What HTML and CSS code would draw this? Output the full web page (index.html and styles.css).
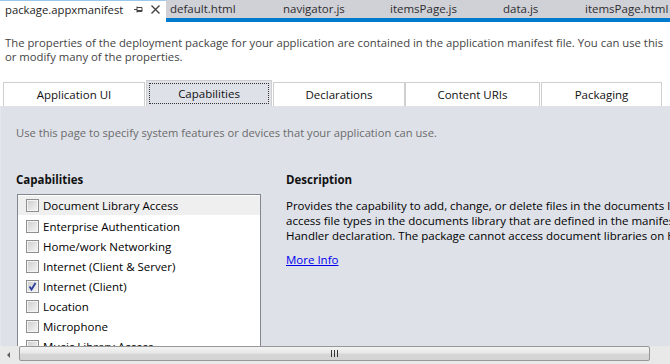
FILE: index.html
```html
<!DOCTYPE html>
<html>
<head>
<meta charset="utf-8">
<link rel="stylesheet" href="styles.css">
</head>
<body>
<div class="doctabs">
  <div class="doctab active">
    <span class="doctab-name">package.appxmanifest</span>
    <svg class="pin" width="9" height="9" viewBox="0 0 9 9"><path d="M0 4.5H3M3 1.5V7.5M3 2.5H8V6.5H3M3 5.5H8" fill="none" stroke="#444" stroke-width="1"/></svg>
    <svg class="close" width="9" height="9" viewBox="0 0 9 9"><path d="M0.5 0.5L8.5 8.5M8.5 0.5L0.5 8.5" fill="none" stroke="#444" stroke-width="1.4"/></svg>
  </div>
  <div class="well">
    <div class="doctab t1">default.html</div>
    <div class="doctab t2">navigator.js</div>
    <div class="doctab t3">itemsPage.js</div>
    <div class="doctab t4">data.js</div>
    <div class="doctab t5">itemsPage.html</div>
  </div>
</div>
<div class="intro">
  <div class="line">The properties of the deployment package for your application are contained in the application manifest file. You can use this</div>
  <div class="line">or modify many of the properties.</div>
</div>
<div class="tabs">
  <div class="tab w1">Application UI</div>
  <div class="tab w2 selected"><span>Capabilities</span></div>
  <div class="tab w3">Declarations</div>
  <div class="tab w4">Content URIs</div>
  <div class="tab w5">Packaging</div>
</div>
<div class="panel">
  <div class="hint">Use this page to specify system features or devices that your application can use.</div>
  <div class="cols">
    <div class="left">
      <div class="heading">Capabilities</div>
      <div class="listbox">
        <div class="item hl"><span class="cb"></span>Document Library Access</div>
        <div class="item"><span class="cb"></span>Enterprise Authentication</div>
        <div class="item"><span class="cb"></span>Home/work Networking</div>
        <div class="item"><span class="cb"></span>Internet (Client &amp; Server)</div>
        <div class="item"><span class="cb checked"><svg width="11" height="11" viewBox="0 0 11 11"><path d="M2.5 5.5L4.5 8.5L8.5 2" fill="none" stroke="#2a3f99" stroke-width="1.8"/></svg></span>Internet (Client)</div>
        <div class="item"><span class="cb"></span>Location</div>
        <div class="item"><span class="cb"></span>Microphone</div>
        <div class="item"><span class="cb"></span>Music Library Access</div>
      </div>
    </div>
    <div class="right">
      <div class="heading">Description</div>
      <div class="desc">
        <div class="line">Provides the capability to add, change, or delete files in the documents library for the local PC. The package can only</div>
        <div class="line">access file types in the documents library that are defined in the manifest using the File Type Associations</div>
        <div class="line">Handler declaration. The package cannot access document libraries on HomeGroup computers.</div>
      </div>
      <a class="more" href="#">More Info</a>
    </div>
  </div>
</div>
<div class="hscroll">
  <div class="arrow"></div>
  <div class="thumb"><span class="grip"></span></div>
</div>
</body>
</html>
```

FILE: styles.css
```css
html, body {
  margin: 0;
  padding: 0;
  width: 670px;
  height: 364px;
  overflow: hidden;
  background: #ffffff;
  font-family: "Open Sans", "Noto Sans", sans-serif;
  font-size: 11px;
  color: #000;
  position: relative;
}

.doctabs {
  display: flex;
  height: 22px;
}

.doctab.active {
  width: 166px;
  flex: none;
  box-sizing: border-box;
  background: #fff;
  border-top: 1px solid #9cc7e8;
  display: flex;
  align-items: center;
  padding-left: 5px;
  padding-bottom: 4px;
  color: #1e1e1e;
  font-size: 11.3px;
}

.doctab-name { width: 129px; flex: none; white-space: nowrap; }

.pin { margin-right: 8px; flex: none; }
.close { flex: none; }

.well {
  flex: 1;
  display: flex;
  background: #d0d1d7;
  border-bottom: 4px solid #007acc;
  height: 18px;
  overflow: hidden;
}

.well .doctab {
  line-height: 18px;
  font-size: 11.5px;
  color: #2d2d30;
  white-space: nowrap;
  padding-left: 4px;
  box-sizing: border-box;
  flex: none;
}
.t1 { width: 113px; }
.t2 { width: 107px; }
.t3 { width: 113px; }
.t4 { width: 82px; }
.t5 { flex: 1 1 auto !important; }

.intro {
  padding: 14px 0 0 5px;
  color: #444;
  font-size: 11.3px;
  line-height: 14px;
  white-space: nowrap;
  overflow: hidden;
  height: 44px;
}

.tabs {
  display: flex;
  align-items: flex-end;
  height: 26px;
  padding-left: 3px;
}

.tab {
  height: 24px;
  box-sizing: border-box;
  border: 1px solid #cfcfcf;
  border-bottom: none;
  display: flex;
  align-items: center;
  justify-content: center;
  background: #fff;
  font-size: 11.5px;
  color: #111;
}
.w1 { width: 142px; margin-right: 1px; }
.w2 { width: 126px; margin-right: 1px; }
.w3 { width: 132px; }
.w4 { width: 135px; margin-right: 1px; }
.w5 { width: 121px; }

.tab.selected {
  height: 26px;
  background: #dee1e8;
  border-color: #cfcfcf;
  padding: 2px;
}
.tab.selected span {
  flex: 1;
  align-self: stretch;
  display: flex;
  align-items: center;
  justify-content: center;
  border: 1px dotted #333;
}

.panel {
  background: #dee1e8;
  height: 258px;
  padding-left: 15px;
  border-left: 1px solid #e6e7ea;
  box-sizing: border-box;
}

.hint {
  padding-top: 20px;
  color: #6b6b6b;
  font-size: 11.2px;
  line-height: 14px;
  white-space: nowrap;
}

.cols {
  display: flex;
  margin-top: 33px;
}

.heading {
  font-weight: bold;
  font-size: 11.5px;
  line-height: 14px;
  color: #111;
}

.left { width: 245px; flex: none; }

.listbox {
  margin-top: 7px;
  margin-left: 1px;
  width: 244px;
  height: 160px;
  box-sizing: border-box;
  background: #fff;
  border: 1px solid #828790;
  padding-top: 1px;
  overflow: hidden;
}

.item {
  height: 20px;
  display: flex;
  align-items: center;
  padding-left: 8px;
  font-size: 11.5px;
  color: #000;
  white-space: nowrap;
}
.item.hl { background: #efefef; height: 19px; margin-bottom: 1px; }

.cb {
  width: 13px;
  height: 13px;
  box-sizing: border-box;
  border: 1px solid #8e8f8f;
  background: linear-gradient(135deg, #cbcbcb 0%, #e6e6e6 60%, #f5f5f5 100%);
  box-shadow: inset 0 0 0 1px #f4f4f4;
  margin-right: 4px;
  flex: none;
  position: relative;
}
.cb.checked svg { position: absolute; left: 0; top: 0; }

.right {
  margin-left: 25px;
  flex: 1;
  overflow: hidden;
  white-space: nowrap;
}

.desc {
  margin-top: 11px;
  line-height: 15px;
  font-size: 11.5px;
  color: #000;
}

.more {
  display: inline-block;
  margin-top: 9px;
  color: #0000ee;
  font-size: 11.5px;
  text-decoration: underline;
}

.hscroll {
  position: absolute;
  left: 0;
  top: 346px;
  width: 670px;
  height: 18px;
  background: #e9e9e9;
  display: flex;
  align-items: flex-start;
}

.arrow {
  width: 0;
  height: 0;
  margin: 6px 0 0 7px;
  border-top: 3px solid transparent;
  border-bottom: 3px solid transparent;
  border-right: 3px solid #606060;
}

.thumb {
  margin-left: 9px;
  width: 631px;
  height: 15px;
  box-sizing: border-box;
  border: 1px solid #979797;
  border-radius: 2px;
  background: linear-gradient(#f3f3f3 0%, #e8e8e8 45%, #d6d6d6 55%, #d3d3d3 100%);
  display: flex;
  align-items: center;
  justify-content: center;
}

.grip {
  width: 7px;
  height: 7px;
  background: repeating-linear-gradient(90deg, #333 0 1px, transparent 1px 3px);
}
```
